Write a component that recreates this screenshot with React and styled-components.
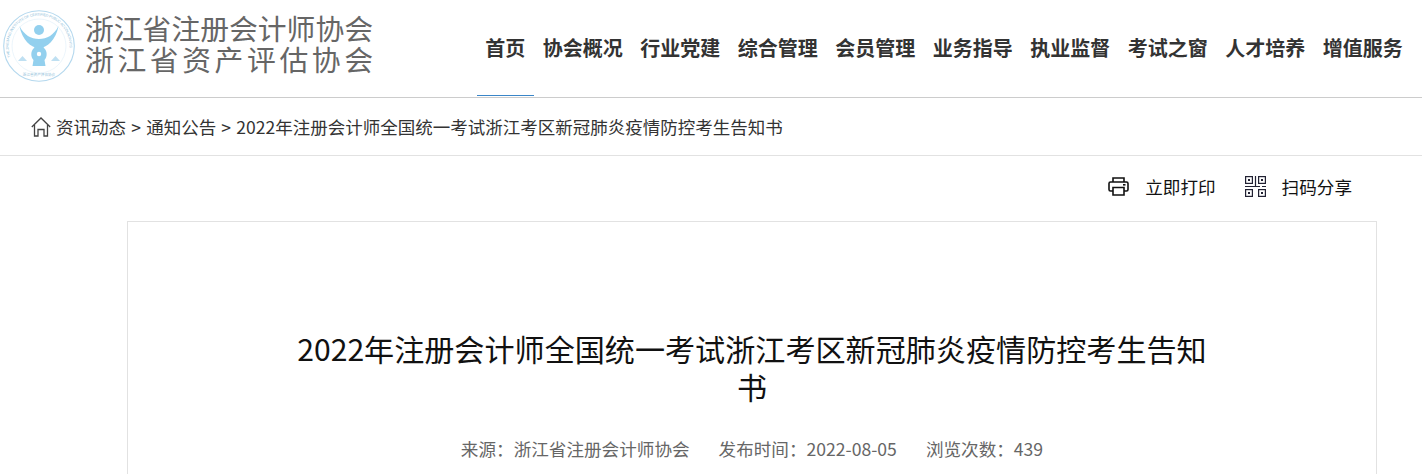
import React from "react";
import styled, { createGlobalStyle } from "styled-components";

const GlobalStyle = createGlobalStyle`
  html, body {
    margin: 0;
    padding: 0;
    background: #fff;
  }
  body {
    font-family: "Noto Sans CJK SC", "Liberation Sans", sans-serif;
  }
`;

// the reference is cut off half way down the article
const Page = styled.div`
  height: 474px;
  overflow: hidden;
`;

const Header = styled.header`
  height: 97px;
  border-bottom: 1px solid #ccc;
  display: flex;
  justify-content: space-between;
  align-items: stretch;
`;

const Brand = styled.div`
  display: flex;
  align-items: center;
  padding: 0 0 5px 3px;
  gap: 10px;
`;

const BrandText = styled.div`
  display: flex;
  flex-direction: column;
  color: #666;
  font-size: 28.8px;
  line-height: 31px;
  margin-top: -7px;
`;

const BrandLine = styled.span`
  letter-spacing: ${(p) => p.$spacing || 0}px;
  white-space: nowrap;
`;

const Nav = styled.nav`
  display: flex;
  padding-right: 10.5px;
`;

const NavItem = styled.a`
  height: 96px;
  box-sizing: border-box;
  padding: 32px 8.75px 0;
  font-size: 20px;
  line-height: 32px;
  font-weight: 700;
  color: #333;
  white-space: nowrap;
  border-bottom: 1px solid ${(p) => (p.$active ? "#3b86c8" : "transparent")};
`;

const Crumbs = styled.div`
  height: 57px;
  border-bottom: 1px solid #e2e2e2;
  display: flex;
  align-items: center;
  padding-left: 31px;
  gap: 5px;
  font-size: 17.5px;
  word-spacing: 1.3px;
  line-height: 24px;
  color: #333;
`;

const Toolbar = styled.div`
  height: 65px;
  box-sizing: border-box;
  padding: 0 70px 4px 0;
  display: flex;
  justify-content: flex-end;
  align-items: center;
  gap: 29px;
`;

const Tool = styled.div`
  display: flex;
  align-items: center;
  gap: 16px;
  font-size: 17.6px;
  line-height: 24px;
  color: #111;
`;

const Card = styled.main`
  width: 1250px;
  box-sizing: border-box;
  margin-left: 127px;
  border: 1px solid #e2e2e2;
  padding: 107px 0 100px;
  display: flex;
  flex-direction: column;
  align-items: center;
`;

const Title = styled.h1`
  width: 920px;
  margin: 0;
  text-align: center;
  font-size: 30.1px;
  line-height: 38px;
  font-weight: 400;
  color: #111;
`;

const Meta = styled.div`
  margin-top: 29px;
  display: flex;
  gap: 29px;
  font-size: 17.6px;
  line-height: 30px;
  color: #666;
`;

const Logo = () => (
  <svg width="72" height="72" viewBox="0 0 72 72">
    <defs>
      <path id="logo-ring" d="M7.500 47 A30.500 30.500 0 1 1 64.500 47" />
    </defs>
    <circle cx="36" cy="36" r="35.300" fill="none" stroke="#b4d8ee" strokeWidth="1.1" />
    <circle cx="36" cy="36" r="27" fill="none" stroke="#e4f1f9" strokeWidth="0.7" />
    <text fontSize="3.600" fill="#8cbcd8" fontFamily="Liberation Sans, sans-serif">
      <textPath href="#logo-ring" textLength="108">THE ZHEJIANG INSTITUTE OF CERTIFIED PUBLIC ACCOUNTANTS</textPath>
    </text>
    <text x="36" y="66" fontSize="3.600" fill="#8cbcd8" textAnchor="middle">浙江省资产评估协会</text>
    <circle cx="36" cy="20" r="5" fill="#93d0ee" />
    <path d="M16.500 16 C19 30 28 38 36 38 C44 38 53 30 55.500 16 C51 25 44 29 36 29 C28 29 21 25 16.500 16 Z" fill="#93d0ee" />
    <path d="M32 36 H40 L41 38 C44.500 41 44.500 47 41.500 50 L42.500 56 H29.500 L30.500 50 C27.500 47 27.500 41 31 38 Z" fill="#93d0ee" />
    <circle cx="36" cy="44" r="2.200" fill="#fff" />
    <path d="M15 51 L19.500 46 L24 51 Z M48 51 L52.500 46 L57 51 Z" fill="#bfe0f2" />
  </svg>
);

const HomeIcon = () => (
  <svg width="20" height="20" viewBox="0 0 20 20" fill="none" stroke="#444" strokeWidth="1.3">
    <path d="M0.800 10 L10 1 L19.200 10" />
    <path d="M3.500 8 V19 H7 V12.500 H13 V19 H16.500 V8" />
  </svg>
);

const PrintIcon = () => (
  <svg width="21" height="19" viewBox="0 0 21 19" fill="none" stroke="#111" strokeWidth="1.6">
    <path d="M5 5 V1 H16 V5" />
    <path d="M5 14 H2.500 Q1 14 1 12.500 V6.500 Q1 5 2.500 5 H18.500 Q20 5 20 6.500 V12.500 Q20 14 18.500 14 H16" />
    <path d="M5 10.500 H16 V18 H5 Z" />
    <path d="M15 7.800 H17.500" />
  </svg>
);

const QrIcon = () => (
  <svg width="21" height="21" viewBox="0 0 21 21" fill="none" stroke="#223" strokeWidth="1.2">
    <rect x="0.600" y="0.600" width="6.800" height="6.800" />
    <rect x="13.600" y="0.600" width="6.800" height="6.800" />
    <rect x="0.600" y="13.600" width="6.800" height="6.800" />
    <rect x="13.600" y="13.600" width="6.800" height="6.800" />
    <rect x="3" y="3" width="2" height="2" fill="#223" stroke="none" />
    <rect x="16" y="3" width="2" height="2" fill="#223" stroke="none" />
    <rect x="3" y="16" width="2" height="2" fill="#223" stroke="none" />
    <rect x="16" y="16" width="2" height="2" fill="#223" stroke="none" />
    <path d="M0 10.500 H15 M17 10.500 H21 M10.500 0 V10.500" />
  </svg>
);

const navItems = ["首页", "协会概况", "行业党建", "综合管理", "会员管理", "业务指导", "执业监督", "考试之窗", "人才培养", "增值服务"];

export default function App() {
  return (
    <Page>
      <GlobalStyle />
      <Header>
        <Brand>
          <Logo />
          <BrandText>
            <BrandLine>浙江省注册会计师协会</BrandLine>
            <BrandLine $spacing={3.6}>浙江省资产评估协会</BrandLine>
          </BrandText>
        </Brand>
        <Nav>
          {navItems.map((item, i) => (
            <NavItem key={item} $active={i === 0}>{item}</NavItem>
          ))}
        </Nav>
      </Header>
      <Crumbs>
        <HomeIcon />
        <span>资讯动态 &gt; 通知公告 &gt; 2022年注册会计师全国统一考试浙江考区新冠肺炎疫情防控考生告知书</span>
      </Crumbs>
      <Toolbar>
        <Tool><PrintIcon />立即打印</Tool>
        <Tool><QrIcon />扫码分享</Tool>
      </Toolbar>
      <Card>
        <Title>2022年注册会计师全国统一考试浙江考区新冠肺炎疫情防控考生告知书</Title>
        <Meta>
          <span>来源：浙江省注册会计师协会</span>
          <span>发布时间：2022-08-05</span>
          <span>浏览次数：439</span>
        </Meta>
      </Card>
    </Page>
  );
}
